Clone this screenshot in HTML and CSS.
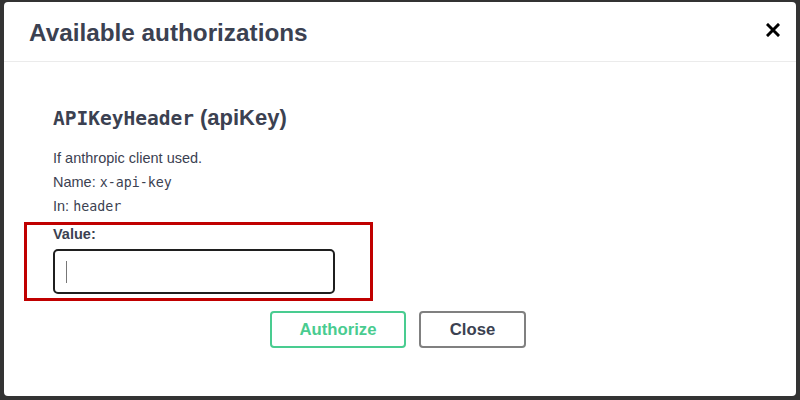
FILE: index.html
```html
<!DOCTYPE html>
<html lang="en">
<head>
<meta charset="utf-8">
<title>Available authorizations</title>
<link rel="stylesheet" href="styles.css">
</head>
<body>
<div class="modal">
  <div class="modal-header">
    <h3 class="modal-title">Available authorizations</h3>
    <button class="close-x" aria-label="Close">
      <svg width="14" height="14" viewBox="0 0 14 14"><path d="M2 2 L12 12 M12 2 L2 12" stroke="#000" stroke-width="3" stroke-linecap="square"/></svg>
    </button>
  </div>
  <div class="modal-body">
    <h4 class="auth-title"><code>APIKeyHeader</code> (apiKey)</h4>
    <p class="line">If anthropic client used.</p>
    <p class="line">Name: <code>x-api-key</code></p>
    <p class="line">In: <code>header</code></p>
    <div class="value-wrap">
      <label class="value-label">Value:</label>
      <div class="input"><span class="caret"></span></div>
      <div class="highlight"></div>
    </div>
    <div class="actions">
      <button class="btn authorize">Authorize</button>
      <button class="btn close">Close</button>
    </div>
  </div>
</div>
</body>
</html>
```
FILE: styles.css
```css
html, body {
  margin: 0;
  padding: 0;
}
body {
  background: #333333;
  width: 800px;
  height: 400px;
  overflow: hidden;
  font-family: "Liberation Sans", Arial, sans-serif;
  color: #3b4151;
}
.modal {
  margin: 2px 4px 0 4px;
  width: 792px;
  height: 394px;
  background: #fff;
  border-radius: 4px;
  box-sizing: border-box;
}
.modal-header {
  display: flex;
  align-items: center;
  justify-content: space-between;
  height: 59px;
  padding: 0 16px 0 25px;
  border-bottom: 1px solid #ebebeb;
}
.modal-title {
  margin: 0;
  font-size: 24.3px;
  font-weight: 700;
  color: #3b4151;
  padding-top: 2px;
}
.close-x {
  background: none;
  border: 0;
  padding: 0;
  width: 14px;
  height: 14px;
  display: flex;
  margin-top: -4px;
}
.modal-body {
  padding: 0 0 0 49px;
}
.auth-title {
  margin: 0;
  padding-top: 42px;
  font-size: 22px;
  font-weight: 700;
  line-height: 28px;
  color: #3b4151;
}
.auth-title code {
  font-family: "DejaVu Sans Mono", monospace;
  font-size: 19.5px;
  font-weight: 700;
}
.line {
  margin: 0;
  font-size: 14.5px;
  line-height: 24px;
  height: 24px;
}
.auth-title + .line {
  margin-top: 13px;
}
.line code {
  font-family: "DejaVu Sans Mono", monospace;
  font-size: 13.3px;
  line-height: 1;
  color: #3b4151;
}
.value-wrap {
  position: relative;
  padding-top: 7px;
}
.value-label {
  display: block;
  font-size: 14.5px;
  font-weight: 700;
  line-height: 18px;
}
.input {
  margin-top: 6px;
  width: 282px;
  height: 45px;
  box-sizing: border-box;
  border: 2px solid #1f1f1f;
  border-radius: 5px;
  display: flex;
  align-items: center;
  padding-left: 11px;
}
.caret {
  width: 1px;
  height: 22px;
  background: #777;
}
.highlight {
  position: absolute;
  left: -29px;
  top: 4px;
  width: 349px;
  height: 79px;
  border: 3px solid #c00000;
  box-sizing: border-box;
}
.actions {
  display: flex;
  gap: 13px;
  margin-top: 17px;
  padding-left: 217px;
}
.btn {
  height: 37px;
  box-sizing: border-box;
  border-radius: 4px;
  background: #fff;
  font-family: "Liberation Sans", Arial, sans-serif;
  font-size: 16.7px;
  font-weight: 700;
  padding: 0;
}
.authorize {
  width: 136px;
  border: 2px solid #49cc90;
  color: #49cc90;
}
.close {
  width: 107px;
  border: 2px solid #808080;
  color: #3b4151;
}
```
